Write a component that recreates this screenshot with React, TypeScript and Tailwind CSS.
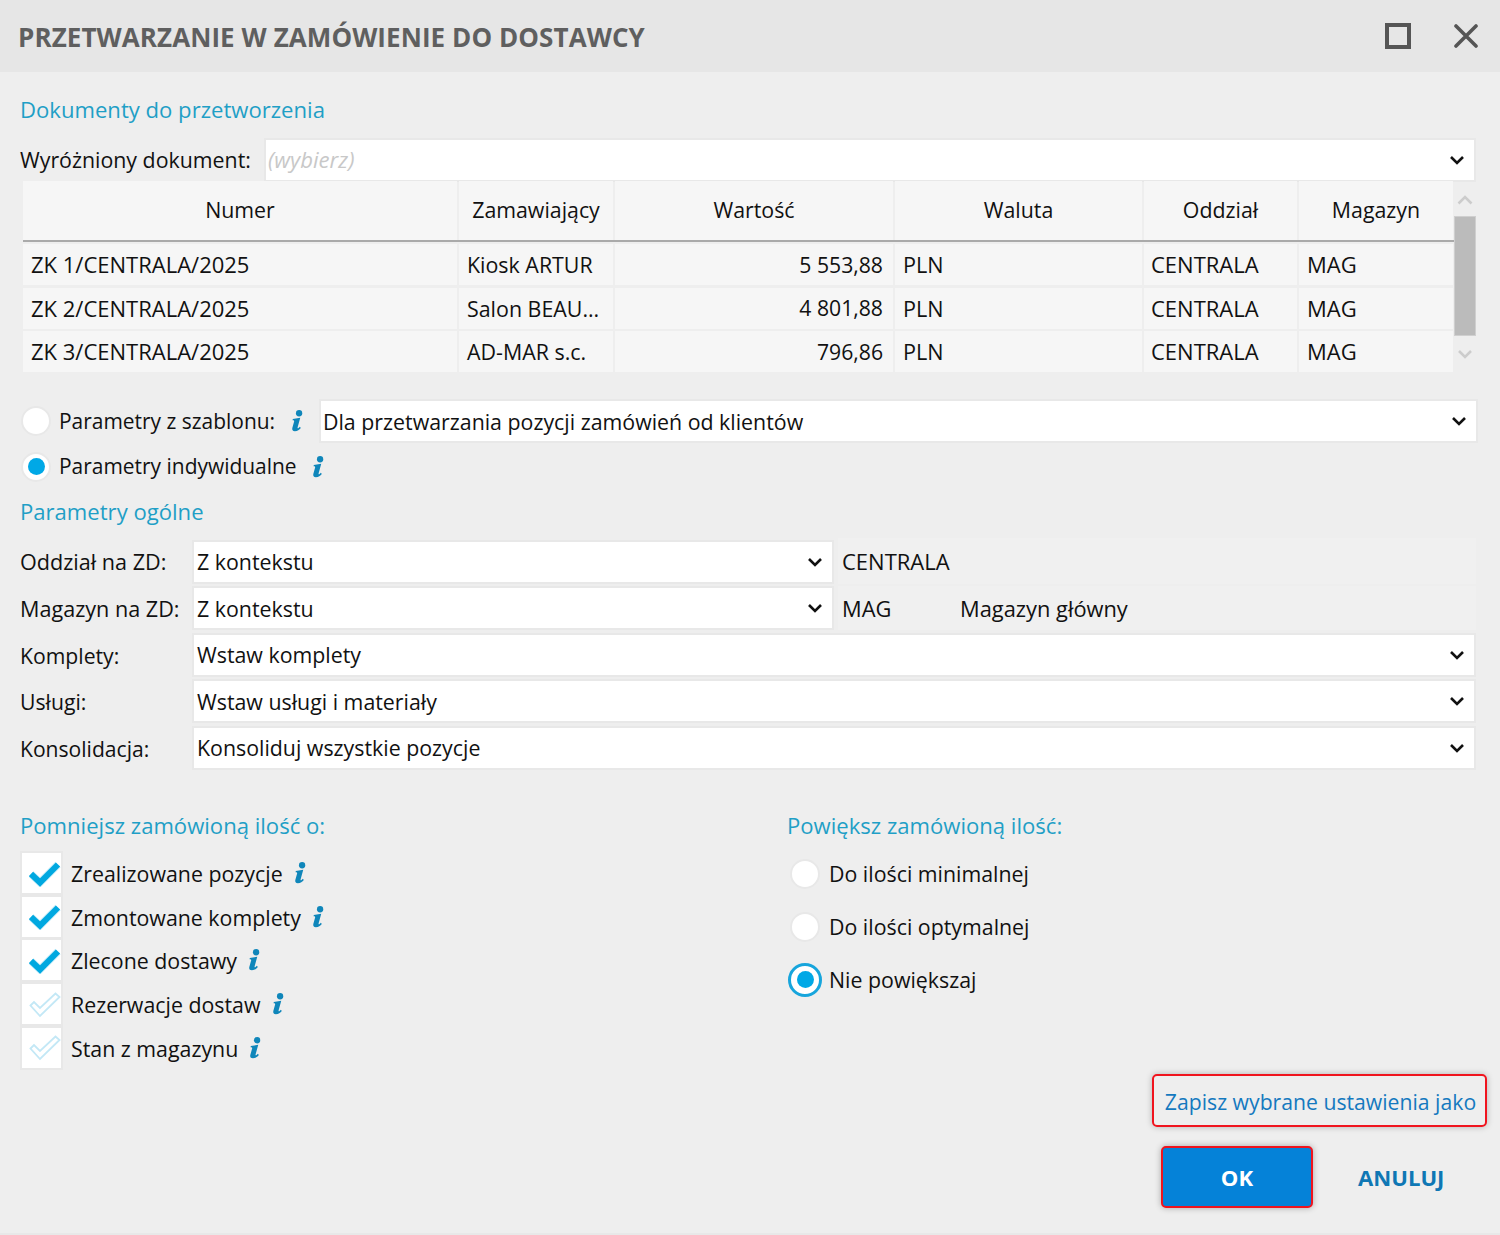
import React from "react";

const Chevron = ({ color = "#111111" }: { color?: string }) => (
  <svg width="16" height="10" viewBox="0 0 16 10" fill="none" className="shrink-0">
    <polyline points="2,2 8,8 14,2" stroke={color} strokeWidth="2.6" />
  </svg>
);

const Info = () => (
  <svg width="12" height="22" viewBox="0 0 12 23" className="shrink-0" fill="#0f86ba">
    <circle cx="8.2" cy="3.4" r="3.3" />
    <path d="M1.6 9.4 L9.4 8.2 L6.6 18.2 C6.4 19.2 7 19.4 7.6 18.9 L9 17.6 L10 18.8 C8.4 20.8 6.6 22.2 3.8 22.2 C1.6 22.2 0.6 20.9 1.1 18.9 L3 11.9 C3.2 11.1 2.8 10.8 1.4 10.7 Z" />
  </svg>
);

const Select = ({ text, className, textClass }: { text: string; className: string; textClass: string }) => (
  <div className={`flex items-center justify-between bg-white border-2 border-[#e8e8e8] pl-[2px] pr-[9px] ${className}`}>
    <span className={textClass}>{text}</span>
    <Chevron />
  </div>
);

const Radio = ({ on, ring }: { on?: boolean; ring?: boolean }) => (
  <span className={`flex items-center justify-center rounded-full bg-white shrink-0 ${ring ? "w-[34px] h-[34px] border-[3px] border-[#17a5dc]" : "w-[30px] h-[30px] border-2 border-[#e8e8e8]"}`}>
    {on && <span className="block w-[17px] h-[17px] rounded-full bg-[#00a8e6]" />}
  </span>
);

const Check = ({ on }: { on: boolean }) => (
  <span className="flex items-center justify-center w-[43px] h-[44px] bg-white border-2 border-[#e8e8e8] shrink-0 pl-[7px] pt-[1px]">
    {on ? (
      <svg width="32" height="26" viewBox="0 0 32 26" fill="none" className="shrink-0">
        <polyline points="2,13 11,21.5 29,3.5" stroke="#c7ecf8" strokeWidth="7.6" />
        <polyline points="2,13 11,21.5 29,3.5" stroke="#00a8e0" strokeWidth="6" />
      </svg>
    ) : (
      <svg width="32" height="26" viewBox="0 0 32 26" fill="none" className="shrink-0">
        <path d="M1.5 13.5 L5 10 L11 16 L26.5 1.5 L30.5 5 L11 24 Z" stroke="#c3e8f6" strokeWidth="1.8" strokeLinejoin="miter" />
      </svg>
    )}
  </span>
);

const cols = ["w-[434px]", "w-[154px]", "w-[278px]", "w-[247px]", "w-[153px]", "w-[154px]"];
const cellText = [
  "text-[22px] pl-[8px]",
  "text-[21.4px] pl-[8px] pt-[2px]",
  "text-[21.2px] justify-end pr-[10px]",
  "text-[21.6px] pl-[8px] pt-[2px]",
  "text-[22px] pl-[7px]",
  "text-[22px] pl-[8px]",
];
const headers = ["Numer", "Zamawiający", "Wartość", "Waluta", "Oddział", "Magazyn"];
const rows = [
  ["ZK 1/CENTRALA/2025", "Kiosk ARTUR", "5 553,88", "PLN", "CENTRALA", "MAG"],
  ["ZK 2/CENTRALA/2025", "Salon BEAU...", "4 801,88", "PLN", "CENTRALA", "MAG"],
  ["ZK 3/CENTRALA/2025", "AD-MAR s.c.", "796,86", "PLN", "CENTRALA", "MAG"],
];

const Section = ({ children, className }: { children: React.ReactNode; className: string }) => (
  <div className={`text-[#1f9fc6] text-[22.1px] leading-[30px] h-[30px] ${className}`}>{children}</div>
);

const FormRow = ({ label, children, className, labelClass }: { label: string; children: React.ReactNode; className?: string; labelClass: string }) => (
  <div className={`flex ${className ?? ""}`}>
    <div className={`w-[172px] shrink-0 flex items-center pt-[2px] ${labelClass}`}>{label}</div>
    {children}
  </div>
);

const formText = "text-[#111111] pt-[2px] ml-[1px]";

export default function App() {
  return (
    <div className="w-[1500px] h-[1235px] bg-[#eeeeee] border-b-2 border-[#e8e8e8] text-[#111111] text-[21.35px] whitespace-nowrap overflow-hidden flex flex-col" style={{ fontFamily: '"Open Sans", "Noto Sans", sans-serif' }}>
      <header className="h-[72px] bg-[#e6e6e6] flex items-center justify-between pl-[18px] pr-[22px] shrink-0">
        <h1 className="font-bold text-[26px] text-[#5f5f5f] tracking-[0.08px] pt-[2px]">PRZETWARZANIE W ZAMÓWIENIE DO DOSTAWCY</h1>
        <div className="flex items-center gap-[43px]">
          <span className="block w-[26px] h-[26px] border-[4px] border-[#555555]" />
          <svg width="24" height="24" viewBox="0 0 24 24" fill="none">
            <path d="M2 2 L22 22 M22 2 L2 22" stroke="#555555" strokeWidth="3.6" strokeLinecap="round" />
          </svg>
        </div>
      </header>

      <main className="pl-[20px] flex flex-col">
        <Section className="mt-[22px]">Dokumenty do przetworzenia</Section>

        <div className="flex items-center mt-[14px] h-[44px]">
          <div className="w-[244px] shrink-0">Wyróżniony dokument:</div>
          <Select text="(wybierz)" textClass="italic text-[#c8c8c8] text-[22.1px]" className="w-[1212px] h-[44px]" />
        </div>

        <div className="flex ml-[3px] -mt-px">
          <div className="w-[1431px] flex flex-col">
            <div className="flex h-[59px] gap-[2px]">
              {headers.map((h, i) => (
                <div key={h} className={`${cols[i]} shrink-0 bg-[#f6f6f6] flex items-center justify-center pb-[1px]`}>{h}</div>
              ))}
            </div>
            <div className="h-[2px] bg-[#aaaaaa] mb-[2px]" />
            {rows.map((r, ri) => (
              <div key={ri} className="flex h-[41px] gap-[2px] mb-[2.5px]">
                {r.map((c, i) => (
                  <div key={i} className={`${cols[i]} ${cellText[i]} shrink-0 bg-[#f6f6f6] flex items-center`}>{c}</div>
                ))}
              </div>
            ))}
          </div>
          <div className="w-[22px] flex flex-col items-center">
            <div className="h-[35px] flex items-center justify-center pt-[3px]">
              <svg width="16" height="10" viewBox="0 0 16 10" fill="none"><polyline points="1.5,8.5 8,2 14.5,8.5" stroke="#cccccc" strokeWidth="2.6" /></svg>
            </div>
            <div className="w-[22px] h-[120px] bg-[#bbbbbb] border border-[#cfcfcf]" />
            <div className="h-[36px] flex items-center justify-center">
              <Chevron color="#cccccc" />
            </div>
          </div>
        </div>

        <div className="flex items-center mt-[24px] h-[44px]">
          <span className="ml-[1px]"><Radio /></span>
          <span className="ml-[8px] w-[232px] shrink-0 text-[20.95px] pt-[3px]">Parametry z szablonu:</span>
          <Info />
          <Select text="Dla przetwarzania pozycji zamówień od klientów" textClass="text-[#111111] pt-[4px]" className="ml-[16px] w-[1159px] h-[44px]" />
        </div>
        <div className="flex items-center h-[44px] mt-[2px]">
          <span className="ml-[1px]"><Radio on /></span>
          <span className="ml-[8px] w-[253px] shrink-0 text-[20.95px]">Parametry indywidualne</span>
          <Info />
        </div>
        <Section className="mt-[7px]">Parametry ogólne</Section>

        <FormRow label="Oddział na ZD:" labelClass="text-[21.6px]" className="mt-[14px] h-[44px]">
          <Select text="Z kontekstu" textClass={formText} className="w-[642px] h-[44px]" />
          <div className="ml-[4px] w-[638px] h-[46px] -mt-[2px] bg-[#f0f0f0] flex items-center pl-[4px] pt-[2px] text-[22px]">CENTRALA</div>
        </FormRow>
        <FormRow label="Magazyn na ZD:" labelClass="text-[21.6px]" className="mt-[2.5px] h-[44px]">
          <Select text="Z kontekstu" textClass={formText} className="w-[642px] h-[44px]" />
          <div className="ml-[4px] w-[638px] h-[44px] bg-[#f0f0f0] flex items-center pl-[4px] pt-[2px] text-[21.85px]">
            <span className="w-[118px]">MAG</span>
            <span>Magazyn główny</span>
          </div>
        </FormRow>
        <FormRow label="Komplety:" labelClass="text-[21.2px]" className="mt-[2.5px] h-[44px]">
          <Select text="Wstaw komplety" textClass={formText} className="w-[1284px] h-[44px]" />
        </FormRow>
        <FormRow label="Usługi:" labelClass="text-[21.2px]" className="mt-[2.5px] h-[44px]">
          <Select text="Wstaw usługi i materiały" textClass={formText} className="w-[1284px] h-[44px]" />
        </FormRow>
        <FormRow label="Konsolidacja:" labelClass="text-[21.1px]" className="mt-[2.5px] h-[44px]">
          <Select text="Konsoliduj wszystkie pozycje" textClass={formText} className="w-[1284px] h-[44px]" />
        </FormRow>

        <div className="flex mt-[40px]">
          <div className="w-[767px] shrink-0 flex flex-col">
            <Section className="mb-[12px]">Pomniejsz zamówioną ilość o:</Section>
            {[
              ["Zrealizowane pozycje", true],
              ["Zmontowane komplety", true],
              ["Zlecone dostawy", true],
              ["Rezerwacje dostaw", false],
              ["Stan z magazynu", false],
            ].map(([t, on]) => (
              <div key={t as string} className="flex items-center h-[43.6px]">
                <Check on={on as boolean} />
                <span className="ml-[8px] mr-[11px] pt-[2px]">{t as string}</span>
                <Info />
              </div>
            ))}
          </div>
          <div className="flex flex-col">
            <Section className="mb-[12px]">Powiększ zamówioną ilość:</Section>
            <div className="flex items-center h-[44px] ml-[3px]"><Radio /><span className="ml-[9px] pt-[2px]">Do ilości minimalnej</span></div>
            <div className="flex items-center h-[44px] mt-[9px] ml-[3px]"><Radio /><span className="ml-[9px] pt-[2px]">Do ilości optymalnej</span></div>
            <div className="flex items-center h-[44px] mt-[9px] ml-[1px]"><Radio on ring /><span className="ml-[7px] pt-[2px]">Nie powiększaj</span></div>
          </div>
        </div>

        <div className="flex flex-col items-end mt-[5px] pr-[13px]">
          <button className="w-[335px] h-[53px] border-2 border-[#f0141e] rounded-[5px] text-[21.2px] text-[#1479bf] shadow-[0_0_6px_rgba(0,0,0,0.25)] flex items-center justify-center pt-[2px] pl-[2px]">Zapisz wybrane ustawienia jako</button>
          <div className="flex items-center mt-[19px]">
            <button className="w-[152px] h-[62px] bg-[#0582d8] border-2 border-[#f0141e] rounded-[5px] text-[22.1px] text-white font-bold shadow-[0_0_6px_rgba(0,0,0,0.3)]">OK</button>
            <button className="w-[86px] ml-[45px] mr-[43px] text-[22.1px] text-[#0f77b4] font-bold">ANULUJ</button>
          </div>
        </div>
      </main>
    </div>
  );
}
